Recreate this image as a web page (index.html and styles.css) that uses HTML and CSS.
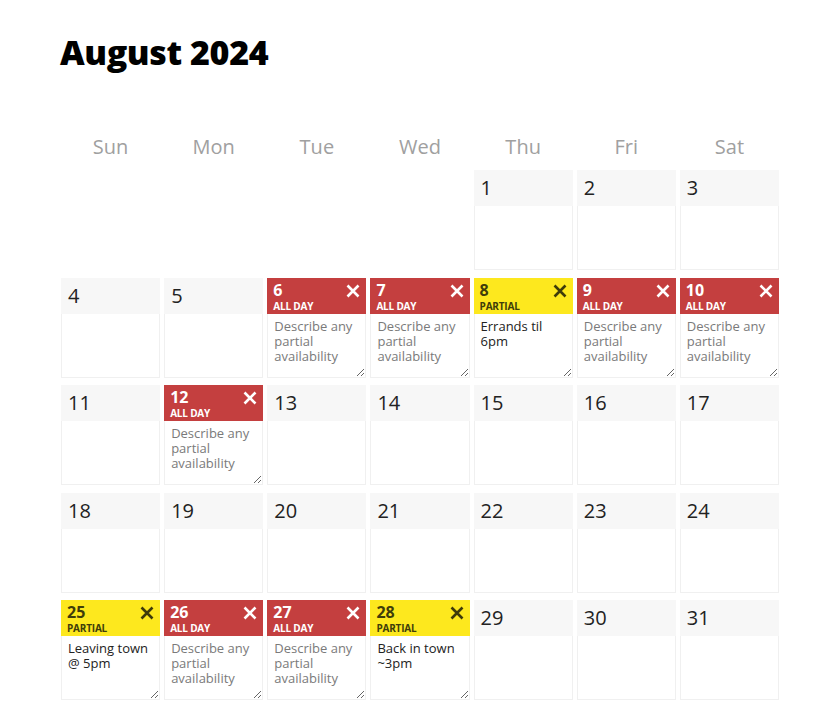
FILE: index.html
```html
<!DOCTYPE html>
<html lang="en">
<head>
<meta charset="utf-8">
<title>August 2024</title>
<link rel="stylesheet" href="styles.css">
</head>
<body>
<main class="page">
  <h1 class="title">August 2024</h1>
  <div class="dow">
    <div>Sun</div><div>Mon</div><div>Tue</div><div>Wed</div><div>Thu</div><div>Fri</div><div>Sat</div>
  </div>
  <div class="grid">
    <div class="blank"></div><div class="blank"></div><div class="blank"></div><div class="blank"></div>
    <div class="cell"><div class="head">1</div><div class="body"></div></div>
    <div class="cell"><div class="head">2</div><div class="body"></div></div>
    <div class="cell"><div class="head">3</div><div class="body"></div></div>

    <div class="cell"><div class="head">4</div><div class="body"></div></div>
    <div class="cell"><div class="head">5</div><div class="body"></div></div>
    <div class="cell busy"><div class="chead"><div class="num">6</div><div class="tag">All day</div><svg class="x" viewBox="0 0 14 14"><path d="M1.5 1.5L12.5 12.5M12.5 1.5L1.5 12.5"/></svg></div><textarea class="note" placeholder="Describe any partial availability"></textarea></div>
    <div class="cell busy"><div class="chead"><div class="num">7</div><div class="tag">All day</div><svg class="x" viewBox="0 0 14 14"><path d="M1.5 1.5L12.5 12.5M12.5 1.5L1.5 12.5"/></svg></div><textarea class="note" placeholder="Describe any partial availability"></textarea></div>
    <div class="cell partial"><div class="chead"><div class="num">8</div><div class="tag">Partial</div><svg class="x" viewBox="0 0 14 14"><path d="M1.5 1.5L12.5 12.5M12.5 1.5L1.5 12.5"/></svg></div><textarea class="note" placeholder="Describe any partial availability">Errands til 6pm</textarea></div>
    <div class="cell busy"><div class="chead"><div class="num">9</div><div class="tag">All day</div><svg class="x" viewBox="0 0 14 14"><path d="M1.5 1.5L12.5 12.5M12.5 1.5L1.5 12.5"/></svg></div><textarea class="note" placeholder="Describe any partial availability"></textarea></div>
    <div class="cell busy"><div class="chead"><div class="num">10</div><div class="tag">All day</div><svg class="x" viewBox="0 0 14 14"><path d="M1.5 1.5L12.5 12.5M12.5 1.5L1.5 12.5"/></svg></div><textarea class="note" placeholder="Describe any partial availability"></textarea></div>

    <div class="cell"><div class="head">11</div><div class="body"></div></div>
    <div class="cell busy"><div class="chead"><div class="num">12</div><div class="tag">All day</div><svg class="x" viewBox="0 0 14 14"><path d="M1.5 1.5L12.5 12.5M12.5 1.5L1.5 12.5"/></svg></div><textarea class="note" placeholder="Describe any partial availability"></textarea></div>
    <div class="cell"><div class="head">13</div><div class="body"></div></div>
    <div class="cell"><div class="head">14</div><div class="body"></div></div>
    <div class="cell"><div class="head">15</div><div class="body"></div></div>
    <div class="cell"><div class="head">16</div><div class="body"></div></div>
    <div class="cell"><div class="head">17</div><div class="body"></div></div>

    <div class="cell"><div class="head">18</div><div class="body"></div></div>
    <div class="cell"><div class="head">19</div><div class="body"></div></div>
    <div class="cell"><div class="head">20</div><div class="body"></div></div>
    <div class="cell"><div class="head">21</div><div class="body"></div></div>
    <div class="cell"><div class="head">22</div><div class="body"></div></div>
    <div class="cell"><div class="head">23</div><div class="body"></div></div>
    <div class="cell"><div class="head">24</div><div class="body"></div></div>

    <div class="cell partial"><div class="chead"><div class="num">25</div><div class="tag">Partial</div><svg class="x" viewBox="0 0 14 14"><path d="M1.5 1.5L12.5 12.5M12.5 1.5L1.5 12.5"/></svg></div><textarea class="note" placeholder="Describe any partial availability">Leaving town @ 5pm</textarea></div>
    <div class="cell busy"><div class="chead"><div class="num">26</div><div class="tag">All day</div><svg class="x" viewBox="0 0 14 14"><path d="M1.5 1.5L12.5 12.5M12.5 1.5L1.5 12.5"/></svg></div><textarea class="note" placeholder="Describe any partial availability"></textarea></div>
    <div class="cell busy"><div class="chead"><div class="num">27</div><div class="tag">All day</div><svg class="x" viewBox="0 0 14 14"><path d="M1.5 1.5L12.5 12.5M12.5 1.5L1.5 12.5"/></svg></div><textarea class="note" placeholder="Describe any partial availability"></textarea></div>
    <div class="cell partial"><div class="chead"><div class="num">28</div><div class="tag">Partial</div><svg class="x" viewBox="0 0 14 14"><path d="M1.5 1.5L12.5 12.5M12.5 1.5L1.5 12.5"/></svg></div><textarea class="note" placeholder="Describe any partial availability">Back in town ~3pm</textarea></div>
    <div class="cell"><div class="head">29</div><div class="body"></div></div>
    <div class="cell"><div class="head">30</div><div class="body"></div></div>
    <div class="cell"><div class="head">31</div><div class="body"></div></div>
  </div>
</main>
</body>
</html>
```

FILE: styles.css
```css
html, body {
  margin: 0;
  padding: 0;
  background: #fff;
  font-family: "Open Sans", "Noto Sans", sans-serif;
  color: #222;
}

.page {
  padding: 32px 0 0 61px;
  width: 718px;
}

.title {
  margin: 0;
  font-size: 34px;
  line-height: 40px;
  font-weight: 800;
  letter-spacing: -0.4px;
  color: #000;
  margin-left: -1px;
}

.dow {
  display: grid;
  grid-template-columns: repeat(7, 1fr);
  column-gap: 4px;
  margin-top: 63px;
  margin-bottom: 11px;
  font-size: 20px;
  line-height: 24px;
  color: #a0a0a0;
  text-align: center;
}

.grid {
  display: grid;
  grid-template-columns: repeat(7, 1fr);
  column-gap: 4px;
  row-gap: 7.5px;
}

.cell {
  height: 100px;
  display: flex;
  flex-direction: column;
  box-sizing: border-box;
  border: 1px solid #f0f0f0;
  background: #fff;
}

.head {
  height: 36px;
  flex: none;
  margin: -1px -1px 0 -1px;
  background: #f7f7f7;
  padding: 0 7px;
  font-size: 20px;
  line-height: 36px;
  color: #222;
}

.body {
  flex: 1;
}

.chead {
  position: relative;
  height: 36px;
  flex: none;
  margin: -1px -1px 0 -1px;
  padding: 4px 6px 0 6px;
  box-sizing: border-box;
  color: #fff;
}

.busy .chead {
  background: #c43f3f;
}

.partial .chead {
  background: #fde81e;
  color: #403d0a;
}

.num {
  font-size: 16px;
  line-height: 16px;
  font-weight: 700;
}

.tag {
  margin-top: 2px;
  font-size: 10px;
  line-height: 12px;
  font-weight: 700;
  text-transform: uppercase;
  letter-spacing: -0.2px;
}

.x {
  position: absolute;
  top: 6px;
  right: 6px;
  width: 14px;
  height: 14px;
  fill: none;
  stroke: currentColor;
  stroke-width: 2.6;
}

.partial .x {
  stroke: #3e3b0a;
}

.note {
  flex: 1;
  display: block;
  width: 100%;
  box-sizing: border-box;
  border: none;
  outline: none;
  margin: 0;
  padding: 5px 6px 0 6px;
  font-family: "Open Sans", "Noto Sans", sans-serif;
  font-size: 13px;
  line-height: 15px;
  color: #222;
  background: #fff;
  resize: vertical;
  overflow: hidden;
}

.note::placeholder {
  color: #7a7a7a;
  opacity: 1;
}
```
